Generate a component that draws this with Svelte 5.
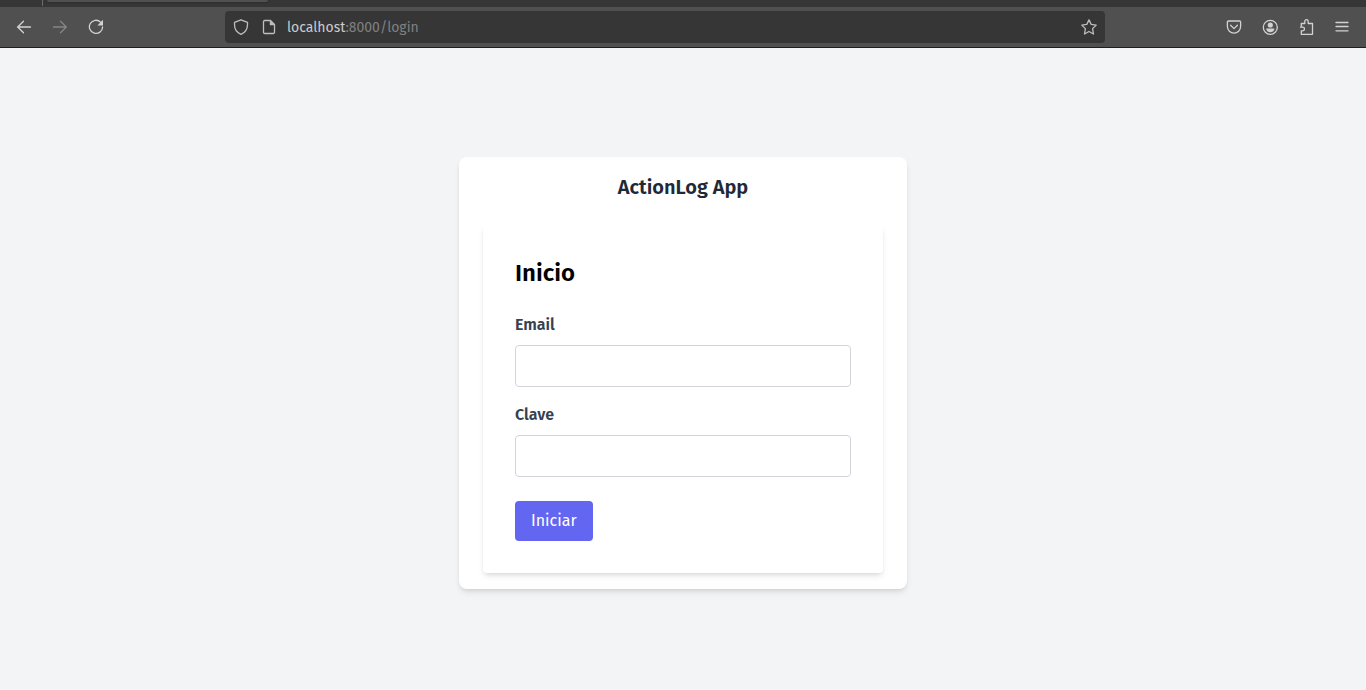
<script>
  let email = $state('');
  let password = $state('');
  let address = $state('localhost:8000/login');
</script>

<div class="window">
  <div class="tabs"><span class="divider"></span><span class="tab"></span></div>

  <header class="toolbar">
    <div class="side">
      <button class="icon" aria-label="Back">
        <svg viewBox="0 0 16 16"><path d="M14.500 8H1.500M7.500 2.200 1.700 8l5.800 5.800" /></svg>
      </button>
      <button class="icon" aria-label="Forward" disabled>
        <svg viewBox="0 0 16 16"><path d="M1.500 8h13M8.500 2.200 14.300 8l-5.800 5.800" /></svg>
      </button>
      <button class="icon" aria-label="Reload">
        <svg viewBox="0 0 16 16">
          <path d="M12.600 3.100A6.600 6.600 0 1 0 14.600 8" />
          <path class="solid" d="M15 .8v5.100a.5.5 0 0 1-.5.5H9.400z" />
        </svg>
      </button>
    </div>

    <div class="urlbar">
      <button class="small" aria-label="Site protection">
        <svg viewBox="0 0 16 16"><path d="M8 .8 14.500 3.300v2.200c0 4.600-2.100 8-6.500 9.800C3.600 13.500 1.500 10.100 1.500 5.500V3.300z" /></svg>
      </button>
      <button class="small" aria-label="Site information">
        <svg viewBox="0 0 16 16">
          <path d="M3.700 1.500h5.800l4 4v7.800a1.200 1.200 0 0 1-1.200 1.200H3.700a1.200 1.200 0 0 1-1.200-1.200V2.700a1.200 1.200 0 0 1 1.200-1.200z" />
          <path class="solid" d="M8.800 1.200V6.200h5z" />
        </svg>
      </button>
      <a class="address" href="#login"><span class="host">{address.slice(0, 9)}</span>{address.slice(9)}</a>
      <button class="small" aria-label="Bookmark this page">
        <svg viewBox="0 0 16 16"><path d="m8 .9 2.200 4.500 5 .7-3.600 3.500.9 5.400L8 12.500 3.500 15l.9-5.400L.8 6.100l5-.7z" /></svg>
      </button>
    </div>

    <div class="side end">
      <button class="icon" aria-label="Save to Pocket">
        <svg viewBox="0 0 16 16">
          <path d="M2.400 2h11.200a1 1 0 0 1 1 1v4.600a6.600 6.600 0 0 1-13.200 0V3a1 1 0 0 1 1-1z" />
          <path d="M4.600 6.300 8 9.600l3.400-3.300" />
        </svg>
      </button>
      <button class="icon" aria-label="Account">
        <svg viewBox="0 0 16 16">
          <circle cx="8.300" cy="8.300" r="7" />
          <circle class="solid" cx="8.300" cy="6" r="2.600" />
          <path class="solid" d="M4.200 9.500h8.200c0 2.200-1.700 3.700-4.100 3.700S4.200 11.700 4.200 9.500z" />
        </svg>
      </button>
      <button class="icon" aria-label="Extensions">
        <svg viewBox="0 0 16 16">
          <path d="M3.300 7V4.500h3.500V2.400a1.700 1.700 0 0 1 3.400 0v2.100h4.300v10.800H3.300v-3.500h1.400a1.800 1.800 0 0 0 0-3.600H2.500" />
        </svg>
      </button>
      <button class="icon" aria-label="Menu">
        <svg viewBox="0 0 16 16"><path d="M2 3.500h12M2 7.500h12M2 11.800h12" /></svg>
      </button>
    </div>
  </header>

  <main>
    <section class="card">
      <h1>ActionLog App</h1>
      <form class="panel" onsubmit={(e) => e.preventDefault()}>
        <h2>Inicio</h2>
        <div class="field">
          <label for="email">Email</label>
          <input id="email" type="email" bind:value={email} />
        </div>
        <div class="field">
          <label for="password">Clave</label>
          <input id="password" type="password" bind:value={password} />
        </div>
        <button class="submit" type="submit">Iniciar</button>
      </form>
    </section>
  </main>
</div>

<style>
  :global(body) {
    margin: 0;
    background: #f3f4f6;
  }

  * {
    box-sizing: border-box;
  }

  .window {
    display: flex;
    flex-direction: column;
    min-height: 100vh;
    font-family: 'Fira Sans', 'Noto Sans', sans-serif;
    font-size: 16px;
    line-height: 24px;
  }

  button,
  input {
    margin: 0;
    font: inherit;
  }

  .tabs {
    display: flex;
    height: 7px;
    padding-left: 42px;
    gap: 4px;
    background: #363636;
  }

  .divider {
    width: 1px;
    height: 6px;
    background: #6a6a6a;
  }

  .tab {
    width: 221px;
    height: 2px;
    border-radius: 0 0 4px 4px;
    background: #505050;
    box-shadow: 0 0 2px #222;
  }

  .toolbar {
    display: grid;
    grid-template-columns: 219fr 880fr 255fr;
    align-items: center;
    padding: 4px 6px;
    border-bottom: 1px solid #241c20;
    background: #505050;
  }

  .side {
    display: flex;
  }

  .end {
    justify-content: flex-end;
  }

  .icon,
  .small {
    display: flex;
    align-items: center;
    justify-content: center;
    width: 36px;
    height: 32px;
    padding: 0;
    border: 0;
    background: none;
    color: #d2d2d2;
  }

  .icon:disabled {
    color: #858585;
  }

  .small {
    width: 28px;
    color: #bebebe;
  }

  svg {
    width: 16px;
    height: 16px;
    fill: none;
    stroke: currentColor;
    stroke-width: 1.3;
    stroke-linejoin: round;
    stroke-linecap: round;
  }

  .solid {
    fill: currentColor;
    stroke: none;
  }

  .urlbar {
    display: flex;
    align-items: center;
    height: 32px;
    padding: 0 2px;
    border-radius: 4px;
    background: #363636;
  }

  .address {
    flex: 1;
    padding: 2px 4px 0;
    color: #808080;
    font-size: 14px;
    text-decoration: none;
  }

  .host {
    color: #cccccc;
  }

  main {
    display: flex;
    flex: 1;
    align-items: center;
    justify-content: center;
    padding-top: 8px;
  }

  .card {
    width: 100%;
    max-width: 448px;
    padding: 16px 24px;
    border-radius: 8px;
    background: #fff;
    box-shadow:
      0 4px 6px -1px rgb(0 0 0 / 0.1),
      0 2px 4px -2px rgb(0 0 0 / 0.1);
  }

  h1 {
    margin: 0 0 24px;
    color: #1f2937;
    font-size: 20px;
    font-weight: 600;
    line-height: 28px;
    text-align: center;
  }

  .panel {
    padding: 32px;
    border-radius: 4px;
    background: #fff;
    box-shadow:
      0 4px 6px -1px rgb(0 0 0 / 0.1),
      0 2px 4px -2px rgb(0 0 0 / 0.1);
  }

  h2 {
    margin: 0 0 24px;
    color: #000;
    font-size: 24px;
    font-weight: 600;
    line-height: 32px;
  }

  .field {
    margin-bottom: 16px;
  }

  label {
    display: block;
    margin-bottom: 8px;
    color: #374151;
    font-weight: 600;
  }

  input {
    display: block;
    width: 100%;
    height: 42px;
    padding: 8px 12px;
    border: 1px solid #d1d5db;
    border-radius: 4px;
    background: #fff;
  }

  .submit {
    display: block;
    margin-top: 24px;
    padding: 8px 16px;
    border: 0;
    border-radius: 4px;
    background: #6366f1;
    color: #fff;
  }
</style>
